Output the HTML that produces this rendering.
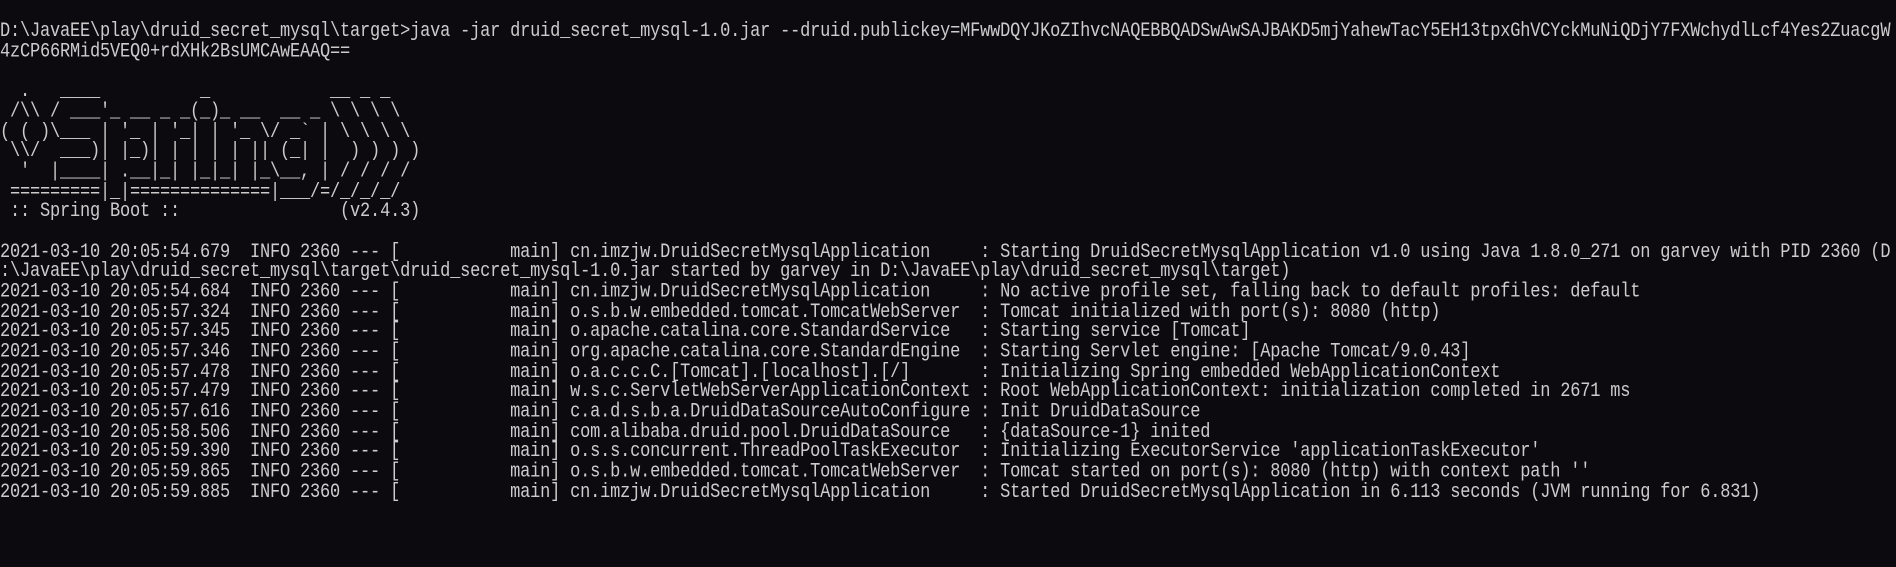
<!DOCTYPE html>
<html><head><meta charset="utf-8"><style>
html,body{margin:0;padding:0;background:#0c0a0f;width:1896px;height:567px;overflow:hidden}
pre{margin:0;padding:19.2px 0 0 0;font-family:"Liberation Mono","Noto Sans CJK SC",monospace;font-size:17px;letter-spacing:-0.2px;line-height:16.6667px;color:#cccccc;white-space:pre;transform:scaleY(1.2);transform-origin:0 0}
</style></head><body><pre>D:\JavaEE\play\druid_secret_mysql\target&gt;java -jar druid_secret_mysql-1.0.jar --druid.publickey=MFwwDQYJKoZIhvcNAQEBBQADSwAwSAJBAKD5mjYahewTacY5EH13tpxGhVCYckMuNiQDjY7FXWchydlLcf4Yes2ZuacgW
4zCP66RMid5VEQ0+rdXHk2BsUMCAwEAAQ==

  .   ____          _            __ _ _
 /\\ / ___'_ __ _ _(_)_ __  __ _ \ \ \ \
( ( )\___ | '_ | '_| | '_ \/ _` | \ \ \ \
 \\/  ___)| |_)| | | | | || (_| |  ) ) ) )
  '  |____| .__|_| |_|_| |_\__, | / / / /
 =========|_|==============|___/=/_/_/_/
 :: Spring Boot ::                (v2.4.3)

2021-03-10 20:05:54.679  INFO 2360 --- [           main] cn.imzjw.DruidSecretMysqlApplication     : Starting DruidSecretMysqlApplication v1.0 using Java 1.8.0_271 on garvey with PID 2360 (D
:\JavaEE\play\druid_secret_mysql\target\druid_secret_mysql-1.0.jar started by garvey in D:\JavaEE\play\druid_secret_mysql\target)
2021-03-10 20:05:54.684  INFO 2360 --- [           main] cn.imzjw.DruidSecretMysqlApplication     : No active profile set, falling back to default profiles: default
2021-03-10 20:05:57.324  INFO 2360 --- [           main] o.s.b.w.embedded.tomcat.TomcatWebServer  : Tomcat initialized with port(s): 8080 (http)
2021-03-10 20:05:57.345  INFO 2360 --- [           main] o.apache.catalina.core.StandardService   : Starting service [Tomcat]
2021-03-10 20:05:57.346  INFO 2360 --- [           main] org.apache.catalina.core.StandardEngine  : Starting Servlet engine: [Apache Tomcat/9.0.43]
2021-03-10 20:05:57.478  INFO 2360 --- [           main] o.a.c.c.C.[Tomcat].[localhost].[/]       : Initializing Spring embedded WebApplicationContext
2021-03-10 20:05:57.479  INFO 2360 --- [           main] w.s.c.ServletWebServerApplicationContext : Root WebApplicationContext: initialization completed in 2671 ms
2021-03-10 20:05:57.616  INFO 2360 --- [           main] c.a.d.s.b.a.DruidDataSourceAutoConfigure : Init DruidDataSource
2021-03-10 20:05:58.506  INFO 2360 --- [           main] com.alibaba.druid.pool.DruidDataSource   : {dataSource-1} inited
2021-03-10 20:05:59.390  INFO 2360 --- [           main] o.s.s.concurrent.ThreadPoolTaskExecutor  : Initializing ExecutorService 'applicationTaskExecutor'
2021-03-10 20:05:59.865  INFO 2360 --- [           main] o.s.b.w.embedded.tomcat.TomcatWebServer  : Tomcat started on port(s): 8080 (http) with context path ''
2021-03-10 20:05:59.885  INFO 2360 --- [           main] cn.imzjw.DruidSecretMysqlApplication     : Started DruidSecretMysqlApplication in 6.113 seconds (JVM running for 6.831)
</pre></body></html>
